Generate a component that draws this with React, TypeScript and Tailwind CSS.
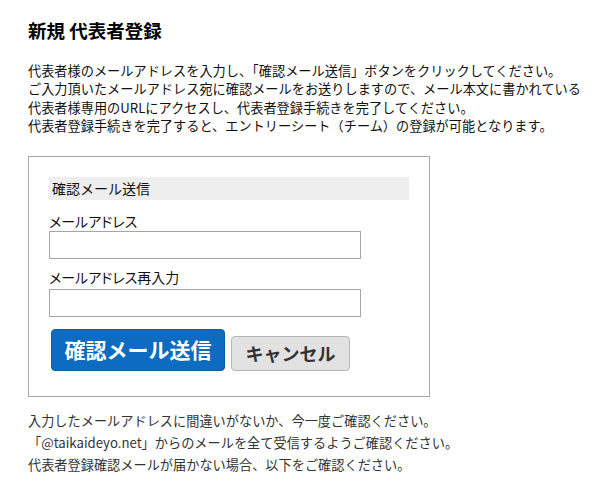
export default function App() {
  return (
    <div className="min-h-[481px] bg-white px-7 pt-[19px] font-['Noto_Sans_CJK_JP',sans-serif] text-[#111]">
      <h1 className="text-[18.5px] font-bold leading-[22px] text-black">新規 代表者登録</h1>

      <p className="mt-[21px] whitespace-nowrap text-[13.2px] leading-[18.4px]">
        代表者様のメールアドレスを入力し、「確認メール送信」ボタンをクリックしてください。
        <br />
        ご入力頂いたメールアドレス宛に確認メールをお送りしますので、メール本文に書かれている
        <br />
        代表者様専用のURLにアクセスし、代表者登録手続きを完了してください。
        <br />
        代表者登録手続きを完了すると、エントリーシート（チーム）の登録が可能となります。
      </p>

      <div className="mt-[20px] w-[402px] border border-[#a8a8a8] px-5 pt-5 pb-[25px]">
        <div className="h-[23px] bg-[#eeeeee] pl-[3px] text-[14px] leading-[23px]">確認メール送信</div>

        <label className="mt-3 block text-[14px] leading-[19px] [font-feature-settings:'palt']">メールアドレス</label>
        <input
          type="email"
          className="block h-[28px] w-[312px] border border-[#a5a5a5] bg-white px-1 text-[14px] outline-none"
        />

        <label className="mt-[9px] block text-[14px] leading-[19px] [font-feature-settings:'palt']">メールアドレス再入力</label>
        <input
          type="email"
          className="mt-[2px] block h-[28px] w-[312px] border border-[#a5a5a5] bg-white px-1 text-[14px] outline-none"
        />

        <div className="mt-3 flex items-end gap-[6px] pl-[2px]">
          <button className="h-[42px] w-[174px] rounded-[4px] border border-[#0a5fa8] bg-[#0d6cbf] text-[21px] font-bold text-white">
            確認メール送信
          </button>
          <button className="h-[35px] w-[119px] rounded-[4px] border border-[#b5b5b5] bg-[#e2e2e2] text-[18px] font-bold text-[#333]">
            キャンセル
          </button>
        </div>
      </div>

      <p className="mt-[13px] whitespace-nowrap text-[13.2px] leading-[22px] text-[#333]">
        入力したメールアドレスに間違いがないか、今一度ご確認ください。
        <br />
        「@taikaideyo.net」からのメールを全て受信するようご確認ください。
        <br />
        代表者登録確認メールが届かない場合、以下をご確認ください。
      </p>
    </div>
  );
}
